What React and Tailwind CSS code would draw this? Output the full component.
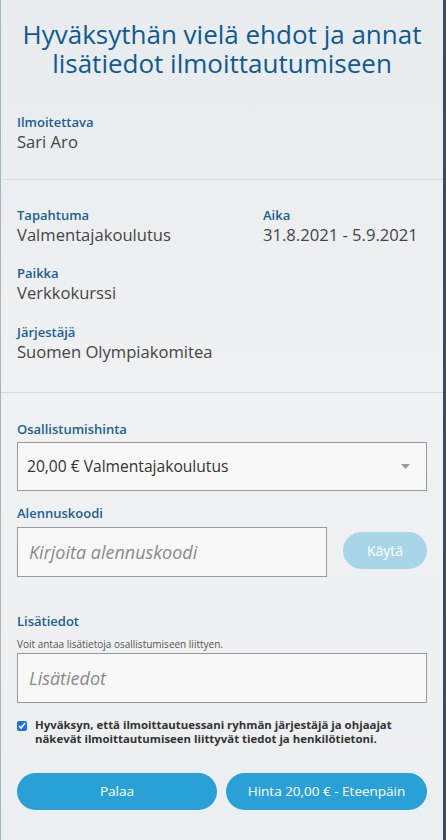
import React from "react";

function Field({ label, value, className = "" }) {
	return (
		<div className={className}>
			<div className="text-[13px] leading-[17px] font-semibold text-[#1b5e95]">{label}</div>
			<div className="text-[16.6px] leading-[22px] text-[#454545]">{value}</div>
		</div>
	);
}

export default function App() {
	return (
		<div
			className="flex h-[840px] w-[446px] bg-[#3b4d5c]"
			style={{ fontFamily: '"Open Sans", "Noto Sans", sans-serif' }}
		>
			<div className="flex h-full w-[443px] flex-col border-l border-[#aab4bd] bg-gradient-to-b from-[#e8ecef] via-[#f0f1f2] to-[#eceff1]">
				<h1 className="px-4 pt-[20px] text-center text-[26px] font-normal leading-[29px] text-[#0f5a91]">
					Hyväksythän vielä ehdot ja annat lisätiedot ilmoittautumiseen
				</h1>

				<div className="px-4 pb-[26px] pt-[36px]">
					<Field label="Ilmoitettava" value="Sari Aro" />
				</div>
				<div className="h-px bg-[#d9dcdf]" />

				<div className="px-4 pb-[29px] pt-[27px]">
					<div className="grid grid-cols-[246px_1fr]">
						<Field label="Tapahtuma" value="Valmentajakoulutus" />
						<Field label="Aika" value="31.8.2021 - 5.9.2021" />
					</div>
					<Field className="mt-[19px]" label="Paikka" value="Verkkokurssi" />
					<Field className="mt-[20px]" label="Järjestäjä" value="Suomen Olympiakomitea" />
				</div>
				<div className="h-px bg-[#d9dcdf]" />

				<div className="px-4 pt-[27px]">
					<div className="text-[13px] leading-[18px] font-semibold text-[#1b5e95]">Osallistumishinta</div>
					<div className="mt-[4px] flex h-[49px] w-[410px] items-center justify-between border border-[#9a9a9a] bg-[#f8f8f8] pl-[9px] pr-[16px]">
						<span className="text-[15.6px] text-[#333]">20,00 € Valmentajakoulutus</span>
						<svg width="9" height="5" viewBox="0 0 9 5">
							<path d="M0 0h9L4.5 5z" fill="#9a9a9a" />
						</svg>
					</div>

					<div className="mt-[13px] text-[13px] leading-[18px] font-semibold text-[#1b5e95]">Alennuskoodi</div>
					<div className="mt-[5px] flex items-center gap-[16px]">
						<div className="flex h-[50px] w-[310px] items-center border border-[#9a9a9a] bg-[#f8f8f8] pl-[11px]">
							<span className="text-[18px] italic text-[#8a8a8a]">Kirjoita alennuskoodi</span>
						</div>
						<button className="mb-[4px] h-[37px] w-[84px] rounded-full bg-[#a9d5e9] text-[14px] font-medium text-white">
							Käytä
						</button>
					</div>

					<div className="mt-[35px] text-[13px] leading-[18px] font-semibold text-[#1b5e95]">Lisätiedot</div>
					<div className="mt-[7px] text-[10px] leading-[14px] text-[#555]">
						Voit antaa lisätietoja osallistumiseen liittyen.
					</div>
					<div className="mt-[2px] flex h-[50px] w-[410px] items-center border border-[#9a9a9a] bg-[#f8f8f8] pl-[11px]">
						<span className="text-[18px] italic text-[#8a8a8a]">Lisätiedot</span>
					</div>

					<label className="mt-[15px] flex gap-[8px]">
						<input type="checkbox" defaultChecked className="mt-[3px] h-[10px] w-[10px] accent-[#1a73e8]" />
						<span className="text-[11.4px] font-bold leading-[13.5px] text-[#333]">
							Hyväksyn, että ilmoittautuessani ryhmän järjestäjä ja ohjaajat näkevät ilmoittautumiseen liittyvät tiedot ja henkilötietoni.
						</span>
					</label>

					<div className="mt-[28px] flex gap-[9px]">
						<button className="h-[37px] w-[200px] rounded-full bg-[#2aa1d6] text-[13.5px] font-medium text-white">
							Palaa
						</button>
						<button className="h-[37px] w-[201px] rounded-full bg-[#2aa1d6] text-[13.5px] font-medium text-white">
							Hinta 20,00 € - Eteenpäin
						</button>
					</div>
				</div>
			</div>
		</div>
	);
}
